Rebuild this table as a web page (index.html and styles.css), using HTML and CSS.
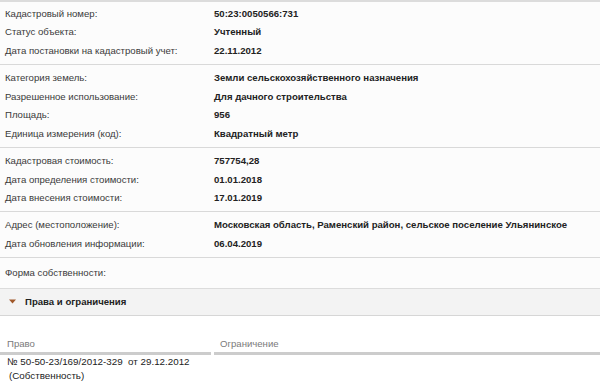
FILE: index.html
```html
<!DOCTYPE html>
<html lang="ru">
<head>
<meta charset="utf-8">
<link rel="stylesheet" href="styles.css">
</head>
<body>
<div class="page">
  <div class="section">
    <div class="row"><span class="label">Кадастровый номер:</span><span class="value">50:23:0050566:731</span></div>
    <div class="row"><span class="label">Статус объекта:</span><span class="value">Учтенный</span></div>
    <div class="row"><span class="label">Дата постановки на кадастровый учет:</span><span class="value">22.11.2012</span></div>
  </div>
  <div class="section">
    <div class="row"><span class="label">Категория земель:</span><span class="value">Земли сельскохозяйственного назначения</span></div>
    <div class="row"><span class="label">Разрешенное использование:</span><span class="value">Для дачного строительства</span></div>
    <div class="row"><span class="label">Площадь:</span><span class="value">956</span></div>
    <div class="row"><span class="label">Единица измерения (код):</span><span class="value">Квадратный метр</span></div>
  </div>
  <div class="section">
    <div class="row"><span class="label">Кадастровая стоимость:</span><span class="value">757754,28</span></div>
    <div class="row"><span class="label">Дата определения стоимости:</span><span class="value">01.01.2018</span></div>
    <div class="row"><span class="label">Дата внесения стоимости:</span><span class="value">17.01.2019</span></div>
  </div>
  <div class="section">
    <div class="row"><span class="label">Адрес (местоположение):</span><span class="value">Московская область, Раменский район, сельское поселение Ульянинское</span></div>
    <div class="row"><span class="label">Дата обновления информации:</span><span class="value">06.04.2019</span></div>
  </div>
  <div class="section section-single">
    <div class="row"><span class="label">Форма собственности:</span><span class="value"></span></div>
  </div>
  <div class="toggle">
    <svg class="caret" width="7" height="5" viewBox="0 0 7 5"><path d="M0 0.5 L7 0.5 L3.5 4.5 Z" fill="#a0582a"/></svg>
    <span class="toggle-title">Права и ограничения</span>
  </div>
  <div class="rights">
    <div class="thead">
      <div class="th th-right">Право</div>
      <div class="th th-limit">Ограничение</div>
    </div>
    <div class="tbody">
      <div class="td td-right">№ 50-50-23/169/2012-329&nbsp; от 29.12.2012<br><span class="own">(Собственность)</span></div>
      <div class="td td-limit"></div>
    </div>
  </div>
</div>
</body>
</html>
```

FILE: styles.css
```css
* { box-sizing: border-box; }
html, body { margin: 0; padding: 0; background: #ffffff; }
body {
  font-family: "Liberation Sans", Arial, sans-serif;
  font-size: 9.6px;
  color: #333333;
  width: 600px;
  height: 384px;
  overflow: hidden;
}
.page { width: 600px; }
.section {
  border-top: 1px solid #d9d9d9;
  background: #fcfcfc;
  padding: 3px 0 4.5px;
}
.section:first-child { border-top: 2px solid #dcdcdc; padding-top: 2px; }
.row {
  display: grid;
  grid-template-columns: 209px 1fr;
  height: 18.6px;
  align-items: center;
  padding-left: 5px;
}
.label { color: #3a3a3a; }
.value { color: #222222; font-weight: bold; }
.section-single { padding: 5px 0 6px; }
.toggle {
  display: flex;
  align-items: center;
  height: 28px;
  background: #f3f3f3;
  border-top: 1px solid #dcdcdc;
  border-bottom: 1px solid #d6d6d6;
  padding-left: 9px;
  gap: 9px;
}
.toggle-title { font-weight: bold; color: #222; }
.rights { padding-top: 19px; }
.thead {
  display: grid;
  grid-template-columns: 211px 1fr;
  column-gap: 3px;
}
.th {
  color: #7a7a7a;
  height: 20px;
  padding-left: 7px;
  padding-top: 3px;
  border-bottom: 3px solid #cccccc;
}
.th-limit { padding-left: 6px; }
.tbody {
  display: grid;
  grid-template-columns: 211px 1fr;
  column-gap: 3px;
  border-bottom: 1px solid #dedede;
}
.td {
  color: #222;
  font-size: 9.8px;
  line-height: 14.5px;
  padding: 0 0 0 7px;
  height: 29px;
}
.own { padding-left: 2px; }
```
